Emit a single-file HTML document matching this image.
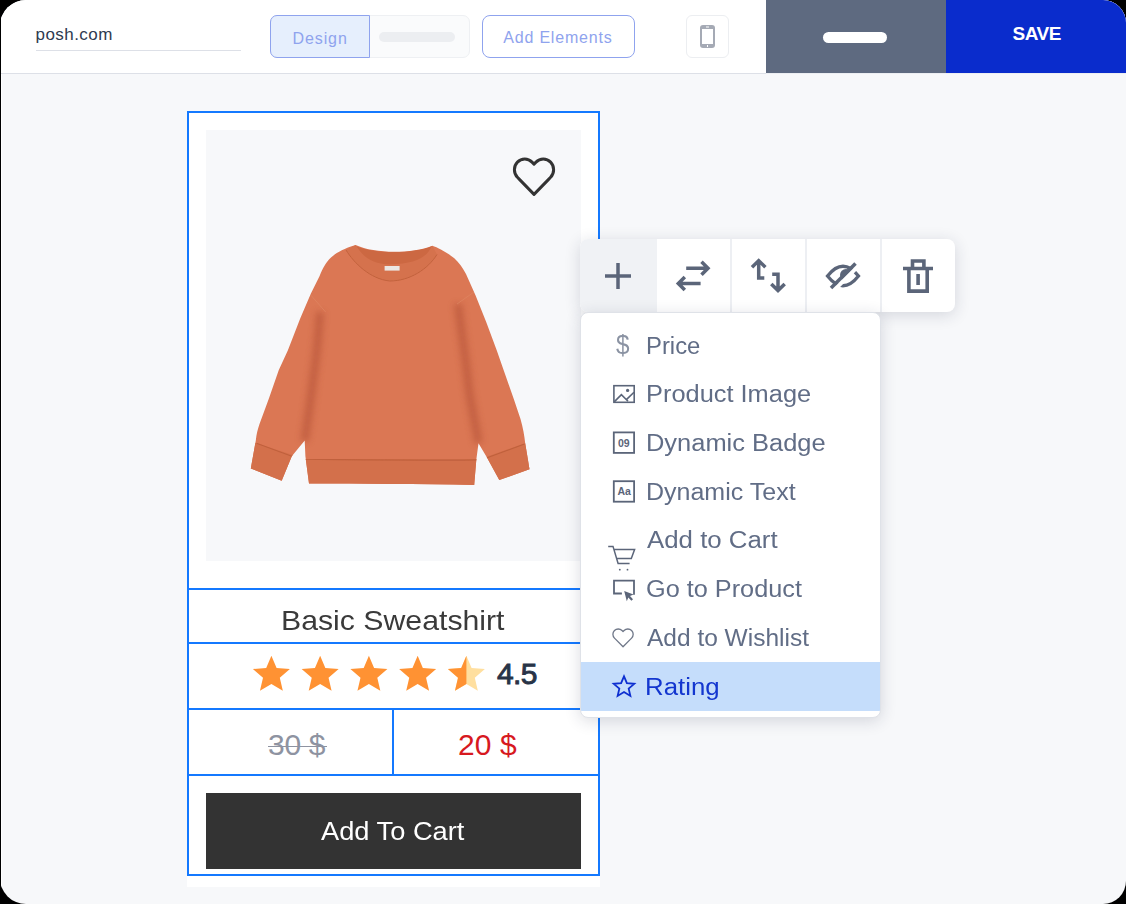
<!DOCTYPE html>
<html><head><meta charset="utf-8">
<style>
html,body{margin:0;padding:0;width:1126px;height:904px;overflow:hidden;background:#000;}
*{box-sizing:border-box;}
body{font-family:"Liberation Sans",sans-serif;position:relative;}
#page{position:absolute;left:1px;top:0;width:1125px;height:904px;background:#f7f8fa;border-radius:26px 23px 23px 26px;overflow:hidden;border-left:1px solid #fff;}
.a{position:absolute;}
.t{position:absolute;white-space:nowrap;line-height:1;}
#hdr{position:absolute;left:0;top:0;width:1126px;height:74px;background:#fff;border-bottom:1px solid #dfe2e8;}
</style></head>
<body>

<!-- header -->
<div class="a" style="left:0;top:0;width:1126px;height:904px;border-radius:26px 23px 23px 26px;overflow:hidden;background:#f7f8fa;">
  <div class="a" style="left:1px;top:0;width:1px;height:904px;background:#fff;"></div>
  <div class="a" style="left:1px;top:0;width:1125px;height:73px;background:#fff;"></div>
  <div class="a" style="left:1px;top:73px;width:765px;height:1px;background:#dde0e7;"></div>
  <div class="a" style="left:766px;top:73px;width:360px;height:1px;background:#eceef2;"></div>
  <div class="t" style="left:35.5px;top:25.8px;font-size:17px;letter-spacing:0.45px;color:#2e3a50;">posh.com</div>
  <div class="a" style="left:36px;top:50px;width:205px;height:1px;background:#dde0e7;"></div>
  <!-- toggle -->
  <div class="a" style="left:269.5px;top:14.5px;width:200px;height:43.5px;border:1px solid #eef0f3;border-radius:7px;background:#fafbfc;"></div>
  <div class="a" style="left:379px;top:32px;width:76px;height:10px;border-radius:5px;background:#eceef1;"></div>
  <div class="a" style="left:269.5px;top:14.5px;width:100px;height:43.5px;border:1.5px solid #8fa3ee;border-radius:7px 0 0 7px;background:#e6effd;"></div>
  <div class="t" style="left:292.5px;top:31.4px;font-size:16px;letter-spacing:0.9px;color:#8fa3ee;">Design</div>
  <!-- add elements -->
  <div class="a" style="left:481.5px;top:14.5px;width:153px;height:43.5px;border:1.5px solid #8fa3ee;border-radius:8px;background:#fff;"></div>
  <div class="t" style="left:503.2px;top:29.5px;font-size:16px;letter-spacing:0.82px;color:#8fa3ee;">Add Elements</div>
  <!-- phone -->
  <div class="a" style="left:686px;top:15px;width:43px;height:43px;border:1px solid #eceef1;border-radius:6px;background:#fff;"></div>
  <svg class="a" style="left:700px;top:25px;" width="15" height="23" viewBox="0 0 15 23">
    <rect x="0" y="0" width="15" height="23" rx="3" fill="#a5aab5"/>
    <rect x="2" y="4" width="11" height="15" fill="#fff"/>
    <rect x="6" y="1.5" width="3" height="1" fill="#fff"/>
    <rect x="7" y="20" width="1" height="2" fill="#fff"/>
  </svg>
  <!-- dark block -->
  <div class="a" style="left:766px;top:0;width:180px;height:73px;background:#5e6a80;"></div>
  <div class="a" style="left:823px;top:32px;width:64px;height:11px;border-radius:5.5px;background:#fff;"></div>
  <div class="a" style="left:946px;top:0;width:180px;height:73px;background:#0a2ccc;"></div>
  <div class="t" style="left:1012.5px;top:23.8px;font-size:19px;font-weight:bold;letter-spacing:-0.5px;color:#fff;">SAVE</div>
</div>

<!-- card -->
<div class="a" style="left:187px;top:111px;width:413px;height:776px;background:#fff;"></div>
<div class="a" style="left:206px;top:130px;width:375px;height:431px;background:#f7f8fa;"></div>
<div class="a" style="left:187px;top:111px;width:413px;height:765px;border:2px solid #1479ff;"></div>
<div class="a" style="left:187px;top:588px;width:413px;height:2px;background:#1479ff;"></div>
<div class="a" style="left:187px;top:642px;width:413px;height:2px;background:#1479ff;"></div>
<div class="a" style="left:187px;top:708px;width:413px;height:2px;background:#1479ff;"></div>
<div class="a" style="left:187px;top:774px;width:413px;height:2px;background:#1479ff;"></div>
<div class="a" style="left:392px;top:708px;width:2px;height:68px;background:#1479ff;"></div>
<div class="a" style="left:206px;top:793px;width:375px;height:76px;background:#333;"></div>
<svg class="a" style="left:0;top:0;" width="1126" height="904" viewBox="0 0 1126 904">
  <path id="heart" d="M20.84 4.61a5.5 5.5 0 0 0-7.78 0L12 5.67l-1.06-1.06a5.5 5.5 0 0 0-7.78 7.78l1.06 1.06L12 21.23l7.78-7.78 1.06-1.06a5.5 5.5 0 0 0 0-7.78z" transform="translate(511.5,153.2) scale(1.876,1.94)" fill="none" stroke="#333" stroke-width="1.6" stroke-linejoin="round"/>
  <defs>
    <filter id="bl2" x="-100%" y="-20%" width="300%" height="140%"><feGaussianBlur stdDeviation="3.2"/></filter>
    <filter id="bl1" x="-20%" y="-20%" width="140%" height="140%"><feGaussianBlur stdDeviation="0.6"/></filter>
    <clipPath id="swclip"><path id="swp" d="M355.6,245.1 C375,254 412,254 432.3,245.7 C438,247.5 448,253 454.3,258.3 C459,263 463,268 466,274 L475.6,295.5 L486.2,322 L496.8,350.4 L503.6,370 L513.7,398.8 L520.5,419 C523,428 524.5,436 525.2,443.3 L529.5,469.2 L499.3,480 L487.1,457.7 L478.5,443.3 L476.3,459.8 L474.2,485 C420,484 360,484 309,483.6 L305.4,456.3 L304.7,440.4 L291.8,456.3 L281.7,480.7 L250.8,468.5 L255.8,440.4 C256.5,434 257.5,430 259.5,424 L268.8,398.8 L278.8,370 L287.8,350.4 L300.2,318.5 L310.8,293.7 L319.6,276 C323,268 326,262 331,257.5 C336,253 343,249 355.6,245.1 Z"/></clipPath>
  </defs>
  <g id="sweat" clip-path="url(#swclip)">
    <rect x="240" y="240" width="300" height="250" fill="#db7754"/>
    <path d="M356,246 C375,254 412,254 432,246 C429,253 424,259 415.3,262.7 C405,265.5 378,265.5 372.6,263.2 C366,260 360,253 356,246 Z" fill="#cc6842"/>
    <path d="M346,250 C354,263 370,279 389.7,281 C410,281 428,269 437,254.5 L432.3,245.7 C426,258 416,263.5 389.7,264.5 C372,264 362,256 355.6,245.1 Z" fill="#d5724d"/>
    <path d="M346,250 C354,263 370,279 389.7,281 C410,281 428,269 437,254.5" fill="none" stroke="#c2623d" stroke-width="1" filter="url(#bl1)"/>
    <rect x="384.6" y="266" width="15" height="4.6" fill="#ebe7e3"/>
    <path d="M320,312 C319,330 316,360 312.6,383.4 C310,405 307,425 304.7,441" fill="none" stroke="#b9573a" stroke-width="8" filter="url(#bl2)" opacity="0.7"/>
    <path d="M458,304 C461,330 466,360 469,390 C472,410 476,428 478.5,443" fill="none" stroke="#b9573a" stroke-width="8" filter="url(#bl2)" opacity="0.7"/>
    <path d="M310.7,295 L325.7,312" stroke="#e08a66" stroke-width="1" fill="none" filter="url(#bl1)" opacity="0.6"/>
    <path d="M474,292 L457,304" stroke="#e08a66" stroke-width="1" fill="none" filter="url(#bl1)" opacity="0.6"/>
    <path d="M300,459 L480,459 L480,490 L300,490 Z" fill="#d3704b"/>
    <path d="M305,459.2 C360,460 420,460.5 477,459.8" fill="none" stroke="#c0603c" stroke-width="1.2" filter="url(#bl1)"/>
    <path d="M240,438 L293,455 L293,490 L240,490 Z" fill="#d3704b"/>
    <path d="M256.5,443.3 L291.8,456.3" fill="none" stroke="#c0603c" stroke-width="1.2" filter="url(#bl1)"/>
    <path d="M540,438 L486,457 L486,490 L540,490 Z" fill="#d3704b"/>
    <path d="M524.5,444 L487.1,457.7" fill="none" stroke="#c0603c" stroke-width="1.2" filter="url(#bl1)"/>
  </g>
</svg>
<div class="t" style="left:281px;top:607px;font-size:28px;color:#3a3a3a;transform:scaleX(1.08);transform-origin:0 0;">Basic Sweatshirt</div>
<div class="t" style="left:497px;top:658.8px;font-size:30px;letter-spacing:-0.6px;color:#283347;-webkit-text-stroke:0.9px #283347;">4.5</div>
<div class="t" style="left:268px;top:729.6px;font-size:30px;letter-spacing:-0.3px;color:#8e93a1;">30 $</div>
<div class="a" style="left:268.2px;top:745.6px;width:58.6px;height:1.6px;background:#8e93a1;"></div>
<div class="t" style="left:458px;top:729.6px;font-size:30px;letter-spacing:0.1px;color:#d7191f;">20 $</div>
<div class="t" style="left:320.5px;top:818.8px;font-size:25px;color:#fff;transform:scaleX(1.09);transform-origin:0 0;">Add To Cart</div>
<svg class="a" style="left:0;top:0;" width="1126" height="904" viewBox="0 0 1126 904"><defs><path id="st" d="M12 17.27L18.18 21l-1.64-7.03L22 9.24l-7.19-.61L12 2 9.19 8.63 2 9.24l5.46 4.73L5.82 21z"/><clipPath id="lh"><rect x="0" y="0" width="12" height="24"/></clipPath></defs><use href="#st" transform="translate(249.20,652) scale(1.85)" fill="#ff9233"/><use href="#st" transform="translate(297.95,652) scale(1.85)" fill="#ff9233"/><use href="#st" transform="translate(346.70,652) scale(1.85)" fill="#ff9233"/><use href="#st" transform="translate(395.45,652) scale(1.85)" fill="#ff9233"/><g transform="translate(444.20,652) scale(1.85)"><use href="#st" fill="#ffdf9f"/><use href="#st" fill="#ff9233" clip-path="url(#lh)"/></g></svg>
<!-- toolbar -->
<div class="a" style="left:580px;top:239px;width:375px;height:73px;border-radius:8px;background:#fff;box-shadow:0 3px 16px rgba(30,40,70,0.16);overflow:hidden;">
  <div class="a" style="left:0;top:0;width:77px;height:73px;background:#f0f2f5;"></div>
  <div class="a" style="left:150px;top:0;width:1.5px;height:73px;background:#edeff3;"></div>
  <div class="a" style="left:225px;top:0;width:1.5px;height:73px;background:#edeff3;"></div>
  <div class="a" style="left:300px;top:0;width:1.5px;height:73px;background:#edeff3;"></div>
</div>
<svg class="a" style="left:0;top:0;" width="1126" height="904" viewBox="0 0 1126 904">
  <g stroke="#5b6579" stroke-width="3.5" fill="none">
    <path d="M605 276H631M618 263V289"/>
    <path d="M686.2 268.3H707.5M701.5 261.8L708 268.3L701.5 274.8"/>
    <path d="M678.5 283.4H700.6M684.8 277.1L678.3 283.6L684.8 290.1"/>
    <path d="M758.7 261V278H764.3M752 267.3L758.7 260.6L765.4 267.3"/>
    <path d="M772.2 274.2H778V290M771.3 283.9L778 290.6L784.7 283.9"/>
  </g>
  <defs>
    <mask id="eyegap" maskUnits="userSpaceOnUse" x="800" y="240" width="80" height="70">
      <rect x="800" y="240" width="80" height="70" fill="#fff"/>
      <path d="M820 304.25L870 254.25" stroke="#000" stroke-width="3.9"/>
    </mask>
    <clipPath id="eyeul"><path d="M800 240H880V241.5L800 321.5Z"/></clipPath>
  </defs>
  <g mask="url(#eyegap)">
    <path d="M827.5 276Q843 256.5 858.5 276Q843 295.5 827.5 276Z" stroke="#5b6579" stroke-width="3.3" fill="none"/>
  </g>
  <g clip-path="url(#eyeul)"><circle cx="846" cy="275" r="6" fill="#5b6579"/></g>
  <path d="M831 288L855.5 263.5" stroke="#5b6579" stroke-width="3.5"/>
  <path d="M903 268.5H933M912.5 267V261H923.9V267M908.9 268V291.1H927.2V268M918.1 274V284.9" stroke="#5b6579" stroke-width="3.6" fill="none"/>
</svg>
<!-- menu -->
<div class="a" style="left:580px;top:312px;width:301px;height:406px;border-radius:8px;background:#fff;border:1px solid #dfe2e8;box-shadow:0 3px 16px rgba(30,40,70,0.16);overflow:hidden;">
  <div class="a" style="left:0;top:349px;width:299px;height:49px;background:#c5ddfb;"></div>
</div>
<div class="t" style="left:646.3px;top:334.6px;font-size:23px;color:#616d86;transform:scaleX(1.037);transform-origin:0 0;">Price</div>
<div class="t" style="left:646.0px;top:383.4px;font-size:23px;color:#616d86;transform:scaleX(1.104);transform-origin:0 0;">Product Image</div>
<div class="t" style="left:646.0px;top:432.0px;font-size:23px;color:#616d86;transform:scaleX(1.106);transform-origin:0 0;">Dynamic Badge</div>
<div class="t" style="left:646.0px;top:480.7px;font-size:23px;color:#616d86;transform:scaleX(1.087);transform-origin:0 0;">Dynamic Text</div>
<div class="t" style="left:646.8px;top:529.2px;font-size:23px;color:#616d86;transform:scaleX(1.123);transform-origin:0 0;">Add to Cart</div>
<div class="t" style="left:646.0px;top:577.9px;font-size:23px;color:#616d86;transform:scaleX(1.099);transform-origin:0 0;">Go to Product</div>
<div class="t" style="left:647.0px;top:627.4px;font-size:23px;color:#616d86;transform:scaleX(1.065);transform-origin:0 0;">Add to Wishlist</div>
<div class="t" style="left:645.0px;top:675.7px;font-size:23px;color:#1336cf;transform:scaleX(1.122);transform-origin:0 0;">Rating</div>
<div class="t" style="left:615.8px;top:332.2px;font-size:27px;color:#8b93a3;transform:scaleX(0.9);transform-origin:0 0;">$</div>
<svg class="a" style="left:0;top:0;" width="1126" height="904" viewBox="0 0 1126 904">
  <g stroke="#5b6579" stroke-width="1.6" fill="none">
    <rect x="613.9" y="385.7" width="20.3" height="16.6"/>
    <path d="M614.2 401.9L621.4 394.6L628 401.3M626.4 399.6L634 392.2"/>
    <rect x="613.8" y="432.4" width="20.3" height="20.5" stroke-width="1.8"/>
    <rect x="613.8" y="481.2" width="20.3" height="20.5" stroke-width="1.8"/>
    <path d="M608.2 546.4H613L618.1 563.5H629.6M613.9 549.6H634.6L631.3 558.6H616.2" stroke-width="1.5"/>
    <path d="M621.9 593.5H614V580.7H634V594.8" stroke-width="1.8"/>
  </g>
  <circle cx="627.6" cy="390.4" r="1.6" fill="#5b6579"/>
  <circle cx="619.8" cy="569.7" r="0.9" fill="#5b6579"/>
  <circle cx="627.5" cy="569.7" r="0.9" fill="#5b6579"/>
  <path d="M624.2 591L633.5 594.5L630 596L633 599.2L631.4 600.8L628.3 597.6L626.8 601.2Z" fill="#5b6579"/>
  <text x="623.8" y="446.8" font-family="Liberation Sans" font-weight="bold" font-size="10.5" fill="#5b6579" text-anchor="middle">09</text>
  <text x="624.2" y="495.2" font-family="Liberation Sans" font-weight="bold" font-size="10.5" fill="#5b6579" text-anchor="middle">Aa</text>
  <path d="M20.84 4.61a5.5 5.5 0 0 0-7.78 0L12 5.67l-1.06-1.06a5.5 5.5 0 0 0-7.78 7.78l1.06 1.06L12 21.23l7.78-7.78 1.06-1.06a5.5 5.5 0 0 0 0-7.78z" transform="translate(611.4,626.1) scale(0.97)" fill="none" stroke="#6f7788" stroke-width="1.35" stroke-linejoin="round"/>
  <path d="M12 17.27L18.18 21l-1.64-7.03L22 9.24l-7.19-.61L12 2 9.19 8.63 2 9.24l5.46 4.73L5.82 21z" transform="translate(611.64,674.3) scale(1.03)" fill="none" stroke="#0e2fd0" stroke-width="1.75"/>
</svg>

<div class="a" style="left:0;top:0;width:1px;height:904px;background:#000;"></div>
</body></html>
